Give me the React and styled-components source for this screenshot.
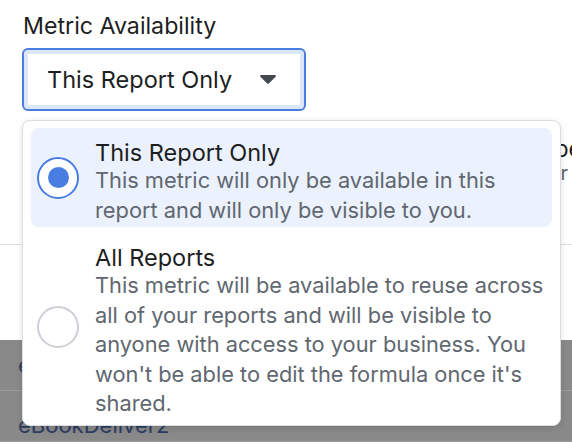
import React, { useState } from "react";
import styled, { createGlobalStyle } from "styled-components";

const GlobalStyle = createGlobalStyle`
  body {
    margin: 0;
    background: #ffffff;
    font-family: Inter, "Liberation Sans", sans-serif;
    overflow: hidden;
  }
`;

const Page = styled.div`
  position: relative;
  width: 572px;
  height: 442px;
  display: flex;
  flex-direction: column;
  overflow: hidden;
`;

const FormSection = styled.div`
  height: 246px;
  box-sizing: border-box;
  padding: 12px 0 0 22px;
  border-bottom: 1px solid #dadde1;
  display: flex;
  flex-direction: column;
`;

const Spacer = styled.div`
  height: 95px;
`;

const Label = styled.div`
  font-size: 23.2px;
  line-height: 28px;
  color: #1c1e21;
  padding-left: 1px;
`;

const SelectBox = styled.div`
  margin-top: 8px;
  width: 284px;
  height: 63px;
  box-sizing: border-box;
  display: flex;
  align-items: center;
  padding: 0 28px 0 23px;
  border: 2px solid #4a7de2;
  border-radius: 6px;
  box-shadow: inset 0 0 0 4px #dce6f9;
  font-size: 23.5px;
  color: #1c1e21;
  cursor: pointer;
`;

const Caret = styled.svg`
  margin-left: auto;
  width: 16px;
  height: 9px;
`;

const SideNote = styled.div`
  display: flex;
  flex-direction: column;
  align-items: flex-end;
  margin: 24px -10px 0 0;
  white-space: nowrap;
`;

const NoteTitle = styled.span`
  font-size: 23px;
  line-height: 28px;
  color: #1c1e21;
`;

const NoteText = styled.span`
  font-size: 20px;
  line-height: 20px;
  color: #606770;
  margin-right: 14px;
`;

const Table = styled.div`
  flex: 1;
  background: #898989;
`;

const Row = styled.div`
  height: 51px;
  box-sizing: border-box;
  border-bottom: 1px solid #9c9c9c;
  display: flex;
  align-items: center;
  padding: ${({ $low }) => ($low ? "18px 0 0 18px" : "0 0 0 18px")};
  font-size: 22px;
  color: #2b3c60;
`;

const Menu = styled.div`
  position: absolute;
  left: 22px;
  top: 120px;
  width: 539px;
  height: 306px;
  box-sizing: border-box;
  padding: 7px 8px;
  background: #ffffff;
  border: 1px solid #dadde1;
  border-radius: 8px;
  box-shadow: 0 2px 6px rgba(0, 0, 0, 0.12);
  display: flex;
  flex-direction: column;
`;

const Option = styled.div`
  display: flex;
  align-items: center;
  gap: 16px;
  padding: ${({ $selected }) => ($selected ? "11px 0 2px 6px" : "17px 0 0 6px")};
  border-radius: 8px;
  background: ${({ $selected }) => ($selected ? "#ebf1fd" : "transparent")};
  cursor: pointer;
`;

const Radio = styled.span`
  flex: none;
  width: 42px;
  height: 42px;
  box-sizing: border-box;
  border-radius: 50%;
  border: 2px solid ${({ $checked }) => ($checked ? "#4a7de2" : "#ccd0d5")};
  background: #ffffff;
  display: flex;
  align-items: center;
  justify-content: center;
  margin-bottom: 9px;

  &::after {
    content: "";
    width: 21px;
    height: 21px;
    border-radius: 50%;
    background: ${({ $checked }) => ($checked ? "#4a7de2" : "transparent")};
  }
`;

const OptionText = styled.div`
  display: flex;
  flex-direction: column;
`;

const OptionTitle = styled.div`
  font-size: 23.5px;
  line-height: 27px;
  color: #1c1e21;
`;

const OptionDesc = styled.div`
  font-size: 21.8px;
  line-height: 29.5px;
  color: #606770;
`;

const options = [
  {
    id: "report",
    title: "This Report Only",
    desc: "This metric will only be available in this report and will only be visible to you.",
  },
  {
    id: "all",
    title: "All Reports",
    desc: "This metric will be available to reuse across all of your reports and will be visible to anyone with access to your business. You won't be able to edit the formula once it's shared.",
  },
];

export default function App() {
  const [value, setValue] = useState("report");
  const current = options.find((o) => o.id === value);

  return (
    <Page>
      <GlobalStyle />
      <FormSection>
        <Label>Metric Availability</Label>
        <SelectBox>
          {current.title}
          <Caret viewBox="0 0 16 9">
            <path
              d="M1.2 0h13.6c1 0 1.5 1.1.8 1.8L8.8 8.4a1.1 1.1 0 0 1-1.6 0L.4 1.8C-.3 1.1.2 0 1.2 0z"
              fill="#444950"
            />
          </Caret>
        </SelectBox>
        <SideNote>
          <NoteTitle>Metric Type</NoteTitle>
          <NoteText>Number</NoteText>
        </SideNote>
      </FormSection>
      <Spacer />
      <Table>
        <Row>eBookDelivery1</Row>
        <Row $low>eBookDeliver2</Row>
      </Table>

      <Menu>
        {options.map((o) => (
          <Option
            key={o.id}
            $selected={o.id === value}
            onClick={() => setValue(o.id)}
          >
            <Radio $checked={o.id === value} />
            <OptionText>
              <OptionTitle>{o.title}</OptionTitle>
              <OptionDesc>{o.desc}</OptionDesc>
            </OptionText>
          </Option>
        ))}
      </Menu>
    </Page>
  );
}
